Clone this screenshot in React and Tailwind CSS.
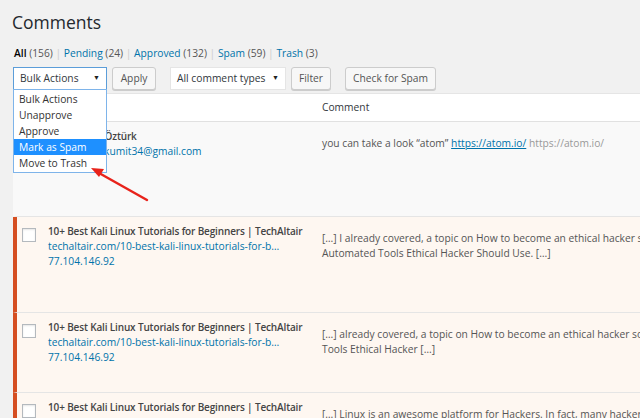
import React from 'react';

const rows = [
  {
    author: 'Ümit Öztürk',
    link: 'ozturkumit34@gmail.com',
    ip: '',
    avatar: true,
    pending: false,
    height: 'h-[95px]',
    comment: null,
  },
  {
    author: '10+ Best Kali Linux Tutorials for Beginners | TechAltair',
    link: 'techaltair.com/10-best-kali-linux-tutorials-for-b…',
    ip: '77.104.146.92',
    pending: true,
    height: 'h-[96px]',
    comment: [
      '[…] I already covered, a topic on How to become an ethical hacker so you must read that first. Here is the list of 10',
      'Automated Tools Ethical Hacker Should Use. […]',
    ],
  },
  {
    author: '10+ Best Kali Linux Tutorials for Beginners | TechAltair',
    link: 'techaltair.com/10-best-kali-linux-tutorials-for-b…',
    ip: '77.104.146.92',
    pending: true,
    height: 'h-[80px]',
    comment: [
      '[…] already covered, a topic on How to become an ethical hacker so you can read that. Here is the list of Automated',
      'Tools Ethical Hacker […]',
    ],
  },
  {
    author: '10+ Best Kali Linux Tutorials for Beginners | TechAltair',
    link: 'techaltair.com/10-best-kali-linux-tutorials-for-b…',
    ip: '77.104.146.92',
    pending: true,
    height: 'h-[80px]',
    comment: [
      '[…] Linux is an awesome platform for Hackers. In fact, many hackers and security researchers use it every day',
    ],
  },
];

const bulkOptions = ['Bulk Actions', 'Unapprove', 'Approve', 'Mark as Spam', 'Move to Trash'];

function Button({ children, className = '' }) {
  return (
    <button
      className={`h-[23px] px-0 rounded-[3px] border border-[#cccccc] bg-[#f7f7f7] text-[#555] shadow-[0_1px_0_#cccccc] leading-none whitespace-nowrap ${className}`}
    >
      {children}
    </button>
  );
}

function Select({ label, className = '' }) {
  return (
    <div className={`h-[23px] flex items-center justify-between bg-white px-[6px] ${className}`}>
      <span className="text-[#32373c]">{label}</span>
      <span className="text-[7px] text-[#222]">▼</span>
    </div>
  );
}

export default function App() {
  return (
    <div
      className="relative w-[640px] h-[418px] overflow-hidden bg-[#f1f1f1] text-[10.25px] text-[#444]"
      style={{ fontFamily: '"Open Sans", "Noto Sans", sans-serif' }}
    >
      <div className="pl-[12px] pt-[8px]">
        {/* Header */}
        <h1 className="text-[17.5px] leading-[28px] text-[#23282d] font-normal">Comments</h1>

        {/* Status links */}
        <div className="mt-[10px] pl-[2px] text-[#555] leading-[15px] whitespace-nowrap">
          <span className="text-[#000] font-semibold">All</span> (156) <span className="text-[#ccc]">|</span>{' '}
          <span className="text-[#0073aa]">Pending</span> (24) <span className="text-[#ccc]">|</span>{' '}
          <span className="text-[#0073aa]">Approved</span> (132) <span className="text-[#ccc]">|</span>{' '}
          <span className="text-[#0073aa]">Spam</span> (59) <span className="text-[#ccc]">|</span>{' '}
          <span className="text-[#0073aa]">Trash</span> (3)
        </div>

        {/* Toolbar */}
        <div className="relative mt-[6px] flex items-center pl-[1px]">
          <div className="relative">
            <Select label="Bulk Actions" className="w-[94px] border border-[#5b9dd9]" />
            <div className="absolute left-0 top-[22px] z-20 w-[94px] border border-[#7eb4ea] bg-white py-[1px]">
              {bulkOptions.map((o) => (
                <div
                  key={o}
                  className={`h-[16px] px-[5px] leading-[16px] ${
                    o === 'Mark as Spam' ? 'bg-[#1e90ff] text-white' : 'text-[#333]'
                  }`}
                >
                  {o}
                </div>
              ))}
            </div>
          </div>
          <Button className="ml-[5px] w-[44px]">Apply</Button>
          <Select label="All comment types" className="ml-[14px] w-[116px] border border-[#e5e5e5]" />
          <Button className="ml-[5px] w-[40px]">Filter</Button>
          <Button className="ml-[14px] w-[91px]">Check for Spam</Button>
        </div>

        {/* Table */}
        <div className="mt-[3px] ml-[1px] w-[900px] border-t border-[#e5e5e5]">
          <div className="flex h-[28px] items-center bg-white border-b border-[#e1e1e1]">
            <div className="w-[27px]" />
            <div className="w-[272px]" />
            <div className="pl-[10px] text-[#32373c]">Comment</div>
          </div>

          {rows.map((r, i) => (
            <div
              key={i}
              className={`flex ${r.height} border-b border-[#e5e5e5] border-l-[4px] ${
                r.pending ? 'bg-[#fef7f1] border-l-[#d54e21]' : 'bg-[#f9f9f9] border-l-[#f9f9f9]'
              }`}
            >
              <div className="w-[23px] shrink-0 pl-[5px] pt-[11px]">
                <div className="h-[14px] w-[14px] border border-[#b4b9be] bg-white shadow-[inset_0_1px_2px_rgba(0,0,0,0.1)]" />
              </div>
              <div className="flex w-[272px] shrink-0 overflow-hidden pl-[8px] pt-[7px] leading-[15px] whitespace-nowrap">
                {r.avatar && <div className="mr-[5px] h-[26px] w-[26px] bg-[#ddd]" />}
                <div>
                  <div className="font-semibold text-[#444] tracking-[-0.15px] text-[10px]">{r.author}</div>
                  <div className="text-[#0073aa]">{r.link}</div>
                  {r.ip && <div className="text-[#0073aa]">{r.ip}</div>}
                </div>
              </div>
              <div className="pl-[10px] pt-[14px] leading-[15px] whitespace-nowrap text-[#555]">
                {r.comment ? (
                  r.comment.map((l, j) => <div key={j}>{l}</div>)
                ) : (
                  <div>
                    you can take a look “atom”{' '}
                    <span className="text-[#0073aa] underline">https://atom.io/</span>{' '}
                    <span className="text-[#999]">https://atom.io/</span>
                  </div>
                )}
              </div>
            </div>
          ))}
        </div>
      </div>

      {/* Annotation arrow */}
      <svg className="absolute left-0 top-0 z-30 pointer-events-none" width="640" height="418">
        <line x1="147" y1="200" x2="99" y2="173" stroke="#e8231b" strokeWidth="2.5" strokeLinecap="round" />
        <polygon points="91,168 104,169 99,177" fill="#e8231b" />
      </svg>
    </div>
  );
}
